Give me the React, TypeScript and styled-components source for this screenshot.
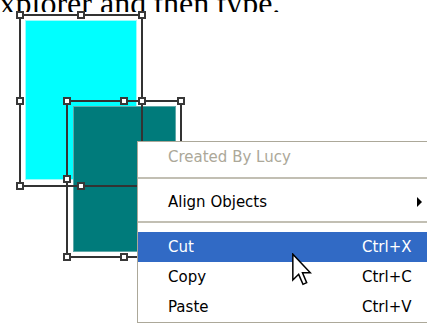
import React from 'react';
import styled, { createGlobalStyle } from 'styled-components';

const GlobalStyle = createGlobalStyle`
  html, body {
    margin: 0;
    padding: 0;
    background: #ffffff;
    overflow: hidden;
  }
`;

const Page = styled.div`
  position: relative;
  width: 427px;
  height: 326px;
  overflow: hidden;
  background: #ffffff;
`;

const Caption = styled.div`
  height: 12px;
  overflow: hidden;
  display: flex;
  align-items: flex-end;
  font-family: 'Liberation Serif', 'Times New Roman', serif;
  font-size: 32px;
  line-height: 32px;
  color: #000;
  white-space: nowrap;

  span {
    display: block;
    margin-left: -20px;
    margin-bottom: -7px;
  }
`;

// the drawing canvas: shapes sit at their own coordinates
const Canvas = styled.div`
  position: absolute;
  inset: 0;
`;

const Shape = styled.div<{ $x: number; $y: number; $w: number; $h: number; $fill: string; $edge: string }>`
  position: absolute;
  left: ${(p) => p.$x}px;
  top: ${(p) => p.$y}px;
  width: ${(p) => p.$w}px;
  height: ${(p) => p.$h}px;
  box-sizing: border-box;
  background: ${(p) => p.$fill};
  border: 1px solid ${(p) => p.$edge};
`;

const Frame = styled.div<{ $x: number; $y: number; $w: number; $h: number }>`
  position: absolute;
  left: ${(p) => p.$x - 1}px;
  top: ${(p) => p.$y - 1}px;
  width: ${(p) => p.$w + 2}px;
  height: ${(p) => p.$h + 2}px;
  box-sizing: border-box;
  border: 2px solid #333333;
`;

const Handle = styled.div<{ $x: number; $y: number }>`
  position: absolute;
  left: ${(p) => p.$x - 4}px;
  top: ${(p) => p.$y - 4}px;
  width: 8px;
  height: 8px;
  box-sizing: border-box;
  background: #ffffff;
  border: 2px solid #383838;
`;

const Menu = styled.div`
  position: absolute;
  left: 137px;
  top: 141px;
  width: 310px;
  box-sizing: border-box;
  background: #ffffff;
  border: 1px solid #aca899;
  display: flex;
  flex-direction: column;
  font-family: 'DejaVu Sans', Tahoma, Verdana, sans-serif;
  font-size: 15px;
  color: #000000;
`;

const MenuItem = styled.div<{ $active?: boolean; $disabled?: boolean }>`
  display: grid;
  grid-template-columns: 30px 194px 55px 1fr;
  align-items: center;
  height: 30px;
  background: ${(p) => (p.$active ? '#316ac5' : 'transparent')};
  color: ${(p) => (p.$active ? '#ffffff' : p.$disabled ? '#aca899' : '#000000')};
`;

const Label = styled.span`
  grid-column: 2;
  white-space: nowrap;
`;

const Shortcut = styled.span`
  grid-column: 3 / span 2;
  white-space: nowrap;
`;

const SubArrow = styled.span`
  grid-column: 4;
  justify-self: start;
  width: 0;
  height: 0;
  border-top: 5px solid transparent;
  border-bottom: 5px solid transparent;
  border-left: 5px solid #000000;
`;

const Separator = styled.div<{ $before: number; $after: number }>`
  height: 2px;
  margin: ${(p) => p.$before}px 0 ${(p) => p.$after}px 0;
  background: #c2bfb3;
`;

const Pointer = styled.svg`
  position: absolute;
  left: 292px;
  top: 253px;
  width: 20px;
  height: 34px;
`;

type Box = { x: number; y: number; w: number; h: number };

const frames: Box[] = [
  { x: 20, y: 15, w: 122, h: 171 },
  { x: 67, y: 101, w: 114, h: 156 },
];

const handlesFor = (b: Box) => {
  const xs = [b.x, b.x + b.w / 2, b.x + b.w];
  const ys = [b.y, b.y + b.h / 2, b.y + b.h];
  const pts: { x: number; y: number }[] = [];
  ys.forEach((y, yi) =>
    xs.forEach((x, xi) => {
      if (yi === 1 && xi === 1) return;
      pts.push({ x: Math.round(x), y: Math.round(y) });
    })
  );
  return pts;
};

const App: React.FC = () => {
  return (
    <Page>
      <GlobalStyle />
      <Caption>
        <span>Explorer and then type.</span>
      </Caption>

      <Canvas>
        <Shape $x={25} $y={20} $w={112} $h={160} $fill="#00ffff" $edge="#9ffcfc" />
        <Shape $x={73} $y={106} $w={103} $h={146} $fill="#007b7b" $edge="#5fa8a8" />
        {frames.map((f, i) => (
          <Frame key={'f' + i} $x={f.x} $y={f.y} $w={f.w} $h={f.h} />
        ))}
        {frames.map((f, i) =>
          handlesFor(f).map((p, j) => <Handle key={`h${i}-${j}`} $x={p.x} $y={p.y} />)
        )}
      </Canvas>

      <Menu>
        <MenuItem $disabled>
          <Label>Created By Lucy</Label>
        </MenuItem>
        <Separator $before={5} $after={8} />
        <MenuItem>
          <Label>Align Objects</Label>
          <SubArrow />
        </MenuItem>
        <Separator $before={4} $after={9} />
        <MenuItem $active>
          <Label>Cut</Label>
          <Shortcut>Ctrl+X</Shortcut>
        </MenuItem>
        <MenuItem>
          <Label>Copy</Label>
          <Shortcut>Ctrl+C</Shortcut>
        </MenuItem>
        <MenuItem>
          <Label>Paste</Label>
          <Shortcut>Ctrl+V</Shortcut>
        </MenuItem>
      </Menu>

      <Pointer viewBox="0 0 12 20">
        <path
          d="M0.5 0.5 L0.5 16 L4 12.6 L6.6 18.6 L8.8 17.6 L6.3 11.7 L11 11.7 Z"
          fill="#ffffff"
          stroke="#000000"
          strokeWidth="0.9"
          strokeLinejoin="miter"
        />
      </Pointer>
    </Page>
  );
};

export default App;
